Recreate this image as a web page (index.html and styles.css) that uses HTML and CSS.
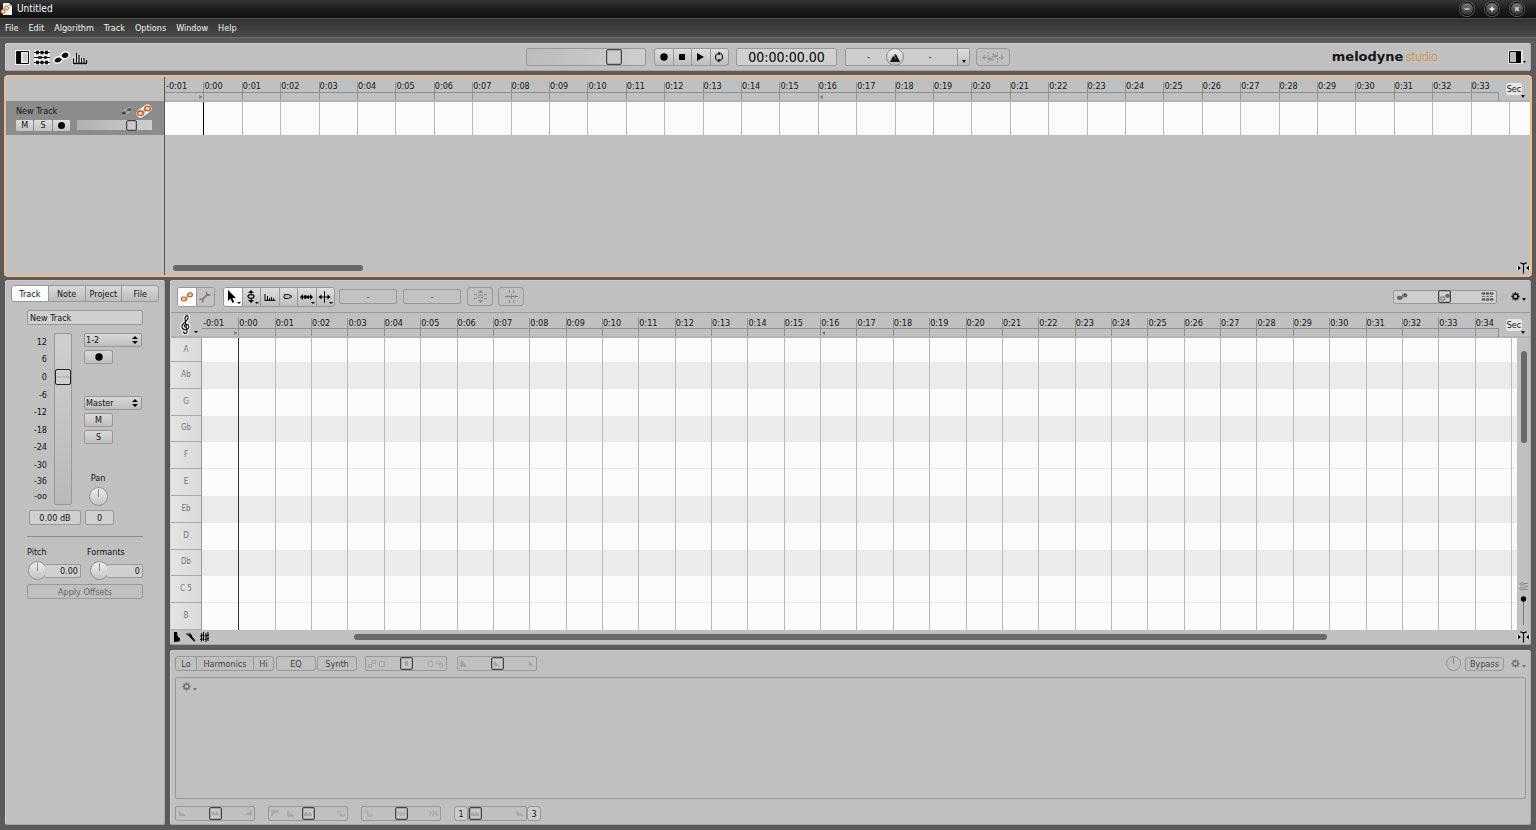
FILE: index.html
```html
<!DOCTYPE html>
<html lang="en">
<head>
<meta charset="utf-8">
<title>Untitled</title>
<link rel="stylesheet" href="styles.css">
</head>
<body>
<svg class="defs" aria-hidden="true">
  <defs>
    <symbol id="gear" viewBox="0 0 10 10"><circle cx="5" cy="5" r="2.6" fill="none" stroke="currentColor" stroke-width="1.8"/><path d="M5 .4v9.200M.4 5h2M7.600 5h2M1.700 1.700l1.500 1.500M6.800 6.800l1.500 1.500M8.300 1.700L6.800 3.200M3.200 6.800L1.700 8.300" stroke="currentColor" stroke-width="1.400" fill="none"/><circle cx="5" cy="5" r="1.600" fill="#c0c0c0"/></symbol>
    <symbol id="caret" viewBox="0 0 4 3"><path d="M0 0h4L2 3z" fill="currentColor"/></symbol>
    <symbol id="zoomcur" viewBox="0 0 13 12"><g stroke="#fff" stroke-width="3" fill="#fff" opacity=".75"><path d="M4.500 1.500h4M6.500 1.500v9.500M1.500 4l1 2-1 2zM11.500 4l-1 2 1 2z"/></g><path d="M3.500 1q3 0 3 2q0-2 3-2" fill="none" stroke="#000" stroke-width="1.300"/><path d="M6.500 2v9.500" stroke="#000" stroke-width="1.500"/><path d="M1 3.500l3 2.500-3 2.500zM12 3.500L9 6l3 2.500z"/></symbol>
    <symbol id="blobs" viewBox="0 0 14 10"><ellipse cx="4" cy="6.500" rx="3.200" ry="2.300" fill="currentColor"/><ellipse cx="9.500" cy="3.800" rx="3" ry="2.300" fill="currentColor"/></symbol>
    <symbol id="linkblobs" viewBox="0 0 16 14"><path d="M4.500 9.500L11.500 4.500" stroke="#fff" stroke-width="8" stroke-linecap="round"/><g fill="#fbd3a8" stroke="#c4512a" stroke-width="1.300"><ellipse cx="4.300" cy="9.300" rx="2.900" ry="2.300"/><ellipse cx="11.500" cy="4.500" rx="2.900" ry="2.300"/></g><path d="M6.500 10.500q2-.5 1.500-3.500 0-3 2-3.500" stroke="#d0713f" stroke-width="1.200" fill="none"/></symbol>
    <symbol id="bars" viewBox="0 0 10 8"><path d="M1 1v6M3 3v4M5 4v3M7 5v2M1 7h8" stroke="currentColor" stroke-width="1.600" fill="none"/></symbol>
    <symbol id="barsmid" viewBox="0 0 10 8"><path d="M1 3v4M3 2v5M5 4v3M7 2v5M9 4v3" stroke="currentColor" stroke-width="1.700" fill="none"/></symbol>
    <symbol id="barsup" viewBox="0 0 10 8"><path d="M1 6v1M3 5v2M5 3v4M7 2v5M9 1v6" stroke="currentColor" stroke-width="1.700" fill="none"/></symbol>
    <symbol id="wave" viewBox="0 0 10 8"><path d="M1 4V1h3v6h2V4M6 7h3V4" stroke="currentColor" fill="none"/></symbol>
    <symbol id="zig" viewBox="0 0 10 8"><path d="M1 7V1l4 6V1l4 6V1" stroke="currentColor" fill="none"/></symbol>
    <symbol id="ramp" viewBox="0 0 8 8"><path d="M1 0q2 4 7 7H1z" fill="currentColor"/></symbol>
  </defs>
</svg>

<header class="titlebar">
  <svg class="docicon" viewBox="0 0 12 12"><path d="M3 0h6l3 3v9H3z" fill="#f2f0ec"/><path d="M9 0v3h3z" fill="#aaa"/><circle cx="6.500" cy="5" r="2" fill="#f8d9bd" stroke="#cf6a35"/><circle cx="3" cy="8.500" r="2" fill="#f8d9bd" stroke="#cf6a35"/></svg>
  <h1 class="title">Untitled</h1>
  <div class="winbtns">
    <button aria-label="Minimize"><svg viewBox="0 0 14 14"><path d="M4 7h6" stroke="#ddd" stroke-width="1.500"/></svg></button>
    <button aria-label="Maximize"><svg viewBox="0 0 14 14"><path d="M7 4v6M4 7h6" stroke="#eee" stroke-width="1.800"/></svg></button>
    <button aria-label="Close"><svg viewBox="0 0 14 14"><path d="M4.800 4.800l4.400 4.400M9.200 4.800L4.800 9.200" stroke="#ccc" stroke-width="1.800"/></svg></button>
  </div>
</header>
<nav class="menubar">
  <button>File</button><button>Edit</button><button>Algorithm</button><button>Track</button><button>Options</button><button>Window</button><button>Help</button>
</nav>

<main class="workspace">
  <section class="panel transport">
    <div class="views">
      <button aria-label="Info pane"><svg width="15" height="15" viewBox="0 0 15 15"><path d="M0 0h15v15H0z" fill="#eee"/><path d="M1.500 1.500h12v12h-12z" fill="#e8e8e8" stroke="#111"/><path d="M2 2h4v11H2z"/><path d="M8 3.500h4v8H8z" fill="#ccc"/></svg></button>
      <button aria-label="Tracks"><svg width="18" height="15" viewBox="0 0 18 15"><path d="M1 2.500h16M1 7.500h16M1 12.500h16" stroke="#fff" stroke-width="5" opacity=".75"/><path d="M1 2.500h16M1 7.500h16M1 12.500h16" stroke="#111"/><path d="M3 2.500h3M7.500 2.500h3M12 2.500h3M3 12.500h3M7.500 12.500h3M12 12.500h3" stroke="#111" stroke-width="3.600"/><path d="M5 7.500h4M11 7.500h3" stroke="#111" stroke-width="2.500"/></svg></button>
      <button aria-label="Notes"><svg width="17" height="15" viewBox="0 0 17 15"><g stroke="#fff" stroke-width="3" stroke-opacity=".8" paint-order="stroke" fill="#111"><path d="M1.500 10q2-3 5-2.500L9 9.500q-2 3-5 3-2.500 0-2.500-2.500z"/><path d="M8.500 6q1-3.500 4.500-3.500 2.500.5 2.500 2.500-1 3-3.500 3-2.500 0-3.500-2z"/></g></svg></button>
      <button aria-label="Sound"><svg class="soundicon" width="16" height="15" viewBox="0 0 16 15"><path d="M1.500 7v6h13M4.500 4v9M7 6v7M9.500 8v5M12 9v4" stroke="#eee" stroke-width="3" fill="none"/><path d="M1.500 8v6M4.500 3v10M7 5v8M9.500 8v5M12 8v5M14.500 10v3M1 13.500h14" stroke="#111" stroke-width="1.300" fill="none"/></svg></button>
    </div>
    <input class="range volume" type="range" aria-label="Volume" value="77">
    <div class="group play">
      <button aria-label="Record"><svg width="8" height="8" viewBox="0 0 8 8"><circle cx="4" cy="4" r="3.700"/></svg></button>
      <button aria-label="Stop"><svg width="6" height="6" viewBox="0 0 6 6"><path d="M0 0h6v6H0z"/></svg></button>
      <button aria-label="Play"><svg width="7" height="8" viewBox="0 0 7 8"><path d="M0 0l7 4-7 4z"/></svg></button>
      <button aria-label="Cycle"><svg width="10" height="12" viewBox="0 0 10 12"><path d="M5.500 2.500Q1.500 2.500 1.500 6q0 2 1 3M4.500 9.500Q8.500 9.500 8.500 6q0-2-1-3" fill="none" stroke="#111" stroke-width="1.100"/><path d="M4.500.5l3 2-3 2zM5.500 7.500v4l-3-2z"/></svg></button>
    </div>
    <output class="clock">00:00:00.00</output>
    <div class="tempo"><span>-</span><button class="metro" aria-label="Metronome"><svg width="10" height="9" viewBox="0 0 10 9"><path d="M0 9L3 3l1.500 1V1l2 1 3.500 7z" fill="#161616"/><path d="M3 1l3 5" stroke="#bbb" stroke-width=".6"/></svg></button><span>-</span><button class="more" aria-label="Tempo options"><svg width="4" height="3"><use href="#caret"/></svg></button></div>
    <button class="ghost autos" aria-label="Auto stretch"><svg width="22" height="11" viewBox="0 0 22 11" fill="#999"><path d="M0 5.500L3 2.500v6zM22 5.500L19 2.500v6z"/><path d="M3 5.500h2M17 5.500h2" stroke="#999"/><ellipse cx="8" cy="7" rx="2.500" ry="1.700"/><ellipse cx="13" cy="4" rx="2.500" ry="1.700"/><path d="M6 0v11M15.500 0v11M11 1v9" stroke="#999" stroke-dasharray="2 1"/></svg></button>
    <div class="brand"><b>melodyne</b><span>studio</span></div>
    <button class="infopane" aria-label="Panels"><svg width="19" height="15" viewBox="0 0 19 15"><path d="M0 0h15v14H0z" fill="#e4e4e4"/><path d="M1.500 1.500h11v11h-11z" fill="#bbb" stroke="#111"/><path d="M8 1h5v12H8z"/><path d="M15 11h3l-1.500 2z"/></svg></button>
  </section>

  <section class="tracks">
    <div class="tracklist">
      <div class="listhead"></div>
      <div class="track">
        <div class="trackname"><span>New Track</span>
          <svg width="13" height="12" viewBox="0 0 13 12"><path d="M4 8L9 4.500" stroke="#aaa" stroke-width="5" stroke-linecap="round"/><path d="M4 8L9 4.500" stroke="#777"/><ellipse cx="3.800" cy="8" rx="2.200" ry="1.600" fill="#444"/><ellipse cx="9.200" cy="4.500" rx="2.200" ry="1.600" fill="#555"/></svg>
          <svg width="16" height="14"><use href="#linkblobs"/></svg></div>
        <div class="trackctl"><div class="msr"><button>M</button><button>S</button><button aria-label="Record arm"><svg width="7" height="7" viewBox="0 0 6 6"><circle cx="3" cy="3" r="3"/></svg></button></div><input class="range mini" type="range" aria-label="Track volume" value="77"></div>
      </div>
    </div>
    <div class="arrange">
      <div class="ruler"><div class="ticks" data-count="35"></div><button class="unit"><span>Sec</span><svg width="4" height="3"><use href="#caret"/></svg></button></div>
      <div class="lane"><div class="ticks grid" data-count="35"></div></div>
      <div class="empty"></div>
      <div class="hscroll"><i class="thumb top"></i><svg width="13" height="12"><use href="#zoomcur"/></svg></div>
    </div>
  </section>

  <div class="lower">
    <aside class="panel inspector">
      <div class="tabs" role="tablist"><button class="on">Track</button><button>Note</button><button>Project</button><button>File</button></div>
      <div class="form">
        <input class="name" type="text" aria-label="Track name" value="New Track">
        <div class="mixer">
          <ul class="scale"><li>12</li><li>6</li><li>0</li><li>-6</li><li>-12</li><li>-18</li><li>-24</li><li>-30</li><li>-36</li><li>-oo</li></ul>
          <input class="fader" type="range" aria-label="Level" value="77">
          <div class="strip">
            <div class="pick"><select aria-label="Input"><option>1-2</option></select><svg width="6" height="8" viewBox="0 0 6 8"><path d="M0 3h6L3 0zM0 5h6L3 8z"/></svg></div>
            <button class="small" aria-label="Record"><svg width="8" height="8" viewBox="0 0 8 8"><circle cx="4" cy="4" r="3.700"/></svg></button>
            <div class="pick out"><select aria-label="Output"><option>Master</option></select><svg width="6" height="8" viewBox="0 0 6 8"><path d="M0 3h6L3 0zM0 5h6L3 8z"/></svg></div>
            <button class="small">M</button>
            <button class="small">S</button>
            <div class="pan"><label for="pan">Pan</label><i class="knob"></i></div>
          </div>
        </div>
        <div class="values"><input type="text" aria-label="Level value" value="0.00 dB"><input id="pan" type="text" value="0"></div>
        <hr>
        <div class="offsets">
          <div><label for="pitch">Pitch</label><div class="dial"><i class="knob"></i><input id="pitch" type="text" value="0.00"></div></div>
          <div><label for="formants">Formants</label><div class="dial"><i class="knob"></i><input id="formants" type="text" value="0"></div></div>
        </div>
        <button class="apply" disabled>Apply Offsets</button>
      </div>
    </aside>

    <div class="rightcol">
      <section class="panel editor">
        <div class="tools">
          <div class="group pair">
            <button class="on" aria-label="Edit mode"><svg width="14" height="12" viewBox="0 0 16 14"><use href="#linkblobs"/></svg></button>
            <button class="off" aria-label="Note assignment"><svg width="12" height="12" viewBox="0 0 12 12"><path d="M3.500 8.500L8.500 3.500" stroke="#777" stroke-width="1.700"/><path d="M.5 8.500Q4 6.500 4 11.500M7.500.5q-1 4 4 3.500" fill="none" stroke="#777" stroke-width="1.500"/></svg></button>
          </div>
          <div class="group six">
            <button class="on" aria-label="Main tool"><svg width="16" height="14" viewBox="0 0 16 14"><path d="M3 0v11l2.500-2.500L7.500 13l1.800-1-2-4H11z"/><path d="M12 12h4l-2 2z"/></svg></button>
            <button aria-label="Pitch tool"><svg width="16" height="14" viewBox="0 0 16 14"><path d="M8 0l3 3H5zM8 13l3-3H5z"/><path d="M8 2v2M8 9v2" stroke="#000"/><ellipse cx="8" cy="6.500" rx="3" ry="1.800" fill="none" stroke="#000" stroke-width="1.200"/><path d="M12 12h4l-2 2z"/></svg></button>
            <button aria-label="Formant tool"><svg width="12" height="8" viewBox="0 0 12 8"><path d="M1 1v6M3.500 3v4M5.500 5v2M7.500 4v3M9.500 5v2M.5 7.400h11" fill="none" stroke="#000"/></svg></button>
            <button aria-label="Amplitude tool"><svg width="10" height="7" viewBox="0 0 10 7"><path d="M1.500 1.500h4l3.500 2-3.500 2h-4q-1-2 0-4z" fill="#bbb" stroke="#111"/></svg></button>
            <button aria-label="Timing tool"><svg width="16" height="14" viewBox="0 0 16 14"><path d="M1 7l3-3v6zM14 7l-3-3v6z"/><path d="M3 7h9" stroke="#000"/><ellipse cx="6.300" cy="7" rx="1.500" ry="1.900"/><ellipse cx="9.200" cy="7" rx="1.200" ry="1.700"/><path d="M12 12h4l-2 2z"/></svg></button>
            <button aria-label="Separation tool"><svg width="16" height="14" viewBox="0 0 16 14"><path d="M7.500 1v12M3 7h9" stroke="#000"/><path d="M1.500 7l3-2.500v5zM13.500 7l-3-2.500v5z"/><path d="M12 12h4l-2 2z"/></svg></button>
          </div>
          <input class="field" type="text" aria-label="Pitch" value="-">
          <input class="field" type="text" aria-label="Cents" value="-">
          <button class="ghost" aria-label="Correct pitch"><svg width="13" height="13" viewBox="0 0 13 13"><path d="M6.500 0l2.500 3H4zM6.500 13L9 10H4z" fill="#888"/><ellipse cx="6.500" cy="6.500" rx="2.500" ry="1.500" fill="none" stroke="#888"/><path d="M0 4.500h3M0 8.500h3M10 4.500h3M10 8.500h3" stroke="#888"/></svg></button>
          <button class="ghost" aria-label="Quantize time"><svg width="13" height="13" viewBox="0 0 13 13"><path d="M0 6.500h13M3 5v3M6.500 4v5M10 5v3M4.500 0v3M8.500 0v3M4.500 10v3M8.500 10v3" stroke="#888"/></svg></button>
          <div class="slider notes"><input class="range" type="range" aria-label="Note display" value="49"><svg class="a" width="13" height="9"><use href="#blobs"/></svg><svg class="b" width="12" height="10" viewBox="0 0 12 10"><ellipse cx="3.500" cy="6.500" rx="2.500" ry="1.600" fill="none" stroke="#666"/><ellipse cx="8.500" cy="3.800" rx="2.500" ry="1.900" fill="#666"/></svg><svg class="c" width="13" height="9" viewBox="0 0 13 9"><path d="M0 1.500h13M0 7.500h13" stroke="#777" stroke-width=".8"/><path d="M1 1.500h3M5 1.500h3M9 1.500h3M1 7.500h3M5 7.500h3M9 7.500h3" stroke="#666" stroke-width="2.400"/><path d="M1 4.500h3M5 4.500h3M9 4.500h3" stroke="#777"/></svg></div>
          <button class="gear" aria-label="Editor options"><svg width="9" height="9"><use href="#gear"/></svg><svg width="4" height="3"><use href="#caret"/></svg></button>
        </div>
        <div class="ruler low">
          <button class="clef" aria-label="Scale"><svg width="20" height="20" viewBox="0 0 20 20"><path d="M5.500 16.500q0 2 2 2 2-.5 1.500-2.500L7 4q0-3 2-3.500 2 1 .5 4L6 8q-3 3-1.500 5.500 2 2 5 .5 2.500-2 .5-4.200-2.500-1.300-3.500 1 0 1.200 1 1.700" fill="none" stroke="#fff" stroke-width="4" stroke-opacity=".7"/><path d="M5.500 16.500q0 2 2 2 2-.5 1.500-2.500L7 4q0-3 2-3.500 2 1 .5 4L6 8q-3 3-1.500 5.500 2 2 5 .5 2.500-2 .5-4.200-2.500-1.300-3.500 1 0 1.200 1 1.700" fill="none" stroke="#111" stroke-width="1.100"/><path d="M16 16h4l-2 2z"/></svg></button>
          <div class="ticks" data-count="36"></div><button class="unit"><span>Sec</span><svg width="4" height="3"><use href="#caret"/></svg></button>
        </div>
        <div class="roll">
          <div class="keys"></div>
          <div class="notesarea"><div class="rows"></div><div class="ticks grid" data-count="36"></div></div>
          <div class="vscroll"><i class="thumb"></i><svg class="zoomer" width="11" height="46" viewBox="0 0 11 46"><g fill="none" stroke="#888"><ellipse cx="4" cy="2" rx="2" ry="1.200"/><ellipse cx="4" cy="6.500" rx="2" ry="1.200"/><path d="M6 1.500h4M6 4.500h4M6 7.500h4"/></g><path d="M5.500 18v25" stroke="#777"/><circle cx="5.500" cy="17" r="2.700"/></svg></div>
        </div>
        <div class="hscroll foot">
          <svg width="36" height="10" viewBox="0 0 36 10"><path d="M1 0h3l.5 4L7 6.500V9l-4 1H1z"/><path d="M13.500 1.500l5 4M16 1l3 3.500M18.500 5l3.500 4M17 4.500l4.500 4.500" stroke="#000" stroke-width="1.200" fill="none"/><path d="M28.500 1v9M30.500 0v9M33 1v9M35 0v9M27 4l4-1M27 7.500l4-1M31.500 4l4-1M31.500 7.500l4-1" stroke="#000"/></svg>
          <div class="rail"><i class="thumb"></i></div>
          <svg width="13" height="12"><use href="#zoomcur"/></svg>
        </div>
      </section>

      <section class="panel sound">
        <div class="soundbar">
          <div class="group harm"><button>Lo</button><button>Harmonics</button><button>Hi</button></div>
          <button class="ghost wide">EQ</button>
          <button class="ghost wide">Synth</button>
          <div class="slider s82"><input class="range" type="range" aria-label="Emphasis" value="50"><svg class="a" width="18" height="8" viewBox="0 0 18 8" fill="none" stroke="currentColor"><path d="M.5 4.500h3v3h-3zM4.500.5h3v3h-3zM11.500 1.500h5v5h-5z"/></svg><svg class="b" width="8" height="7" viewBox="0 0 8 7"><path d="M3 1h3v5H3z" fill="currentColor"/></svg><svg class="c" width="17" height="8" viewBox="0 0 17 8" fill="none" stroke="currentColor"><circle cx="3.500" cy="4" r="2.700"/><circle cx="11.500" cy="2.500" r="1.800"/><circle cx="14.500" cy="5.500" r="1.800"/></svg></div>
          <div class="slider s80"><input class="range" type="range" aria-label="Contour" value="50"><svg class="a" width="7" height="7" viewBox="0 0 7 7"><path d="M0 1h3l4 6H0z" fill="currentColor"/></svg><svg class="b" width="7" height="7"><use href="#ramp"/></svg><svg class="c" width="6" height="7"><use href="#ramp"/></svg></div>
          <i class="knob flat"></i>
          <button class="ghost bypass">Bypass</button>
          <button class="gear dim" aria-label="Sound options"><svg width="9" height="9"><use href="#gear"/></svg><svg width="4" height="3"><use href="#caret"/></svg></button>
        </div>
        <div class="canvas"><button class="gear dim" aria-label="Graph options"><svg width="9" height="9"><use href="#gear"/></svg><svg width="4" height="3"><use href="#caret"/></svg></button></div>
        <div class="soundfoot">
          <div class="slider s80"><input class="range" type="range" aria-label="Brilliance" value="50"><svg class="a" width="8" height="6"><use href="#bars"/></svg><svg class="b" width="8" height="6"><use href="#barsmid"/></svg><svg class="c" width="8" height="6"><use href="#barsup"/></svg></div>
          <div class="slider s80"><input class="range" type="range" aria-label="Odd and even" value="50"><svg class="a" width="24" height="7" viewBox="0 0 24 7"><path d="M1 0v6M3 0v4M5 0v3M7 0v2M17 1v5M19 3v3M21 4v2M17 6h6" stroke="currentColor" stroke-width="1.400" fill="none"/></svg><svg class="b" width="8" height="7"><use href="#barsmid"/></svg><svg class="c" width="8" height="7"><use href="#wave"/></svg></div>
          <div class="slider s80"><input class="range" type="range" aria-label="Comb" value="50"><svg class="a" width="9" height="7"><use href="#wave"/></svg><svg class="b" width="8" height="7"><use href="#zig"/></svg><svg class="c" width="9" height="7"><use href="#zig"/></svg></div>
          <div class="numbered"><button>1</button><div class="slider s58"><input class="range" type="range" aria-label="Partials" value="0"><svg class="a" width="8" height="7"><use href="#barsmid"/></svg><svg class="c" width="8" height="6"><use href="#bars"/></svg></div><button>3</button></div>
        </div>
      </section>
    </div>
  </div>
</main>
<script src="app.js"></script>
</body>
</html>
```

FILE: styles.css
```css
* { box-sizing: border-box; }
body { margin: 0; height: 100vh; min-height: 700px; display: flex; flex-direction: column; background: #5b5b5b; color: #141414; overflow: hidden; }
body, button, input, select, output { font-family: "DejaVu Sans Condensed", "DejaVu Sans", sans-serif; font-size: 9px; line-height: 12px; }
button { margin: 0; padding: 0; border: 0; background: none; color: inherit; display: flex; align-items: center; justify-content: center; }
input, select { margin: 0; color: inherit; border-radius: 2px; }
svg { display: block; flex: none; }
.defs { position: absolute; width: 0; height: 0; }

.titlebar { height: 18px; display: flex; align-items: center; padding: 0 12px 0 0; background: linear-gradient(#373737, #1c1c1c 50%, #101010); color: #fff; flex: none; }
.docicon { width: 12px; height: 12px; }
.title { flex: 1; margin: 0 0 0 5px; font-size: 10px; line-height: 14px; font-weight: 400; }
.winbtns { display: flex; gap: 11px; }
.winbtns button { width: 14px; height: 14px; border-radius: 50%; background: linear-gradient(#777, #333); border: 1px solid #0a0a0a; box-shadow: 0 0 0 1px #555; }
.menubar { height: 20px; flex: none; display: flex; gap: 10px; padding: 0 5px; background: linear-gradient(#333, #4a4a4a); border-top: 1px solid #505050; border-bottom: 1px solid #6b6b6b; color: #f2f2f2; }

.workspace { flex: 1; min-height: 0; display: flex; flex-direction: column; padding: 5px; background: #5b5b5b; }
.panel { background: #c0c0c0; border-radius: 2px; border: 1px solid; border-color: #c9c9c9 #ababab #a6a6a6 #cfcfcf; }

.transport { height: 28px; flex: none; position: relative; display: flex; align-items: center; justify-content: center; padding: 0 6px; }
.views { display: flex; gap: 3px; align-items: center; position: absolute; left: 9px; }
.views button:nth-child(3), .views button:nth-child(4) { margin-left: -1px; }
.group { display: flex; border: 1px solid #989898; border-radius: 3px; overflow: hidden; background: linear-gradient(#dedede, #bdbdbd); }
.group button { flex: 1; }
.group button + button { border-left: 1px solid #999; }
.group .on { background: #fdfdfd; }
.group .off { background: #c3c3c3; }
.range { appearance: none; width: 100%; border: 1px solid #989898; background: linear-gradient(90deg, #bcbcbc, #cecece); outline: 0; }
.range::-webkit-slider-thumb { appearance: none; box-sizing: border-box; width: 13px; height: 13px; border: 1px solid #444; border-radius: 2px; background: rgba(205, 205, 205, .5); box-shadow: inset 0 0 0 1px rgba(120, 120, 120, .4); }
.volume { width: 120px; height: 18px; margin-right: 8px; }
.volume::-webkit-slider-thumb { width: 16px; height: 16px; }
.play { width: 75px; height: 18px; margin-right: 7px; }
.clock { width: 101px; height: 18px; margin-right: 8px; border: 1px solid #989898; border-radius: 2px; background: #d0d0d0; text-align: center; font-size: 14px; line-height: 17px; color: #000; }
.tempo { width: 125px; height: 18px; margin-right: 6px; display: flex; align-items: center; border: 1px solid #989898; border-radius: 2px; background: #cdcdcd; }
.tempo span { width: 44px; text-align: center; }
.metro { width: 18px; height: 18px; border-radius: 50%; border: 1px solid #8e8e8e; background: linear-gradient(#eee, #bbb); margin: 0 4px 0 -5px; }
.tempo span:first-child { width: 45px; }
.more { width: 12px; height: 16px; margin-left: auto; border-left: 1px solid #989898; background: linear-gradient(#dedede, #bdbdbd); padding-top: 9px; }
.ghost { border: 1px solid #999; border-radius: 3px; color: #444; }
.autos { width: 34px; height: 18px; }
.brand { position: absolute; right: 92px; display: flex; align-items: baseline; gap: 2px; line-height: 16px; }
.brand b { font: 700 13px/16px "DejaVu Sans", sans-serif; color: #151515; }
.brand span { font: 300 12px/16px Roboto, sans-serif; color: #e08a2c; }
.infopane { position: absolute; right: 3px; }

.tracks { height: 202px; flex: none; margin: 4px -1px 3px; display: flex; border: 2px solid #efbb86; border-radius: 4px; background: #c0c0c0; }
.tracklist { width: 159px; flex: none; border-right: 1px solid #555; }
.listhead { height: 24px; }
.track { height: 34px; background: #8c8c8c; padding: 3px 12px 0 10px; }
.trackname { display: flex; align-items: center; height: 14px; gap: 3px; }
.trackname span { flex: 1; }
.trackctl { display: flex; align-items: center; gap: 7px; height: 12px; margin-top: 1px; }
.msr { display: flex; width: 54px; gap: 1px; }
.msr button { flex: 1; height: 11px; background: linear-gradient(#ddd, #c2c2c2); border-radius: 1px; }
.mini { flex: 1; min-width: 0; height: 10px; border: 0; background: linear-gradient(90deg, #b0b0b0, #cecece); border-radius: 0; }
.mini::-webkit-slider-thumb { width: 11px; height: 11px; }
.arrange { flex: 1; min-width: 0; display: flex; flex-direction: column; }

.ruler { height: 25px; flex: none; display: flex; position: relative; border-bottom: 2px solid #b2b2b2; }
.ticks { flex: 1; display: grid; grid-auto-flow: column; grid-auto-columns: 1fr; margin-right: 21px; }
.ruler .ticks::after { content: ""; position: absolute; right: 31px; left: 0; top: 15px; height: 8px; border-top: 1px solid #8f8f8f; border-right: 1px solid #8f8f8f; }
.ruler .tick { border-left: 1px solid #929292; margin-top: 5px; line-height: 9px; white-space: nowrap; min-width: 0; position: relative; }
.ruler .tick:first-child { border-left-color: transparent; }
.mark { position: absolute; top: 13px; width: 3px; height: 4px; background: #777; }
.mark.in { left: -5px; clip-path: polygon(0 0, 100% 50%, 0 100%); }
.mark.out { left: 1px; clip-path: polygon(100% 0, 0 50%, 100% 100%); }
.unit { position: absolute; right: 2px; top: 6px; width: 28px; height: 16px; align-items: flex-start; }
.unit span { background: #e6e6e6; border-radius: 3px; padding: 0 1px; line-height: 12px; }
.unit svg { position: absolute; right: 3px; bottom: 1px; }
.lane { height: 33px; background: #fbfbfb; display: flex; }
.grid .tick { border-left: 1px solid #b9b9b9; }
.grid .tick:first-child { border-color: transparent; }
.grid .tick:nth-child(2) { border-color: #000; }
.grid .tick:last-child { box-shadow: 1px 0 #bcbcbc; }
.empty { flex: 1; }
.hscroll { height: 15px; display: flex; align-items: center; justify-content: space-between; padding: 0 0 0 8px; }
.thumb { display: block; height: 6px; border-radius: 3px; background: #696969; }
.thumb.top { width: 190px; }

.lower { flex: 1; min-height: 0; display: flex; gap: 5px; }
.inspector { width: 160px; flex: none; padding: 4px 5px; }
.tabs { display: flex; height: 17px; border: 1px solid #999; border-radius: 3px; overflow: hidden; background: linear-gradient(#d8d8d8, #bcbcbc); }
.tabs button { flex: 1; }
.tabs button + button { border-left: 1px solid #999; }
.tabs .on { background: #fdfdfd; }
.form { padding: 8px 16px 0 16px; }
input[type=text] { border: 1px solid #989898; background: #d0d0d0; height: 15px; padding: 0 2px; }
.name { width: 100%; display: block; }
.mixer { display: grid; grid-template-columns: 20px 18px 58px; height: 172px; margin-top: 8px; column-gap: 7px; }
.scale { height: 170px; margin: 0; padding: 0; list-style: none; text-align: right; display: grid; grid-template-rows: repeat(8, 18fr) 15fr 15fr; align-items: center; }
.fader { appearance: none; writing-mode: vertical-lr; direction: rtl; width: 18px; height: 172px; border: 1px solid #989898; background: linear-gradient(#cfcfcf, #b9b9b9); outline: 0; }
.fader::-webkit-slider-thumb { appearance: none; box-sizing: border-box; width: 16px; height: 16px; border: 1px solid #222; border-radius: 2px; background: linear-gradient(transparent 6px, #bbb 6px, #bbb 8px, transparent 8px), #cfcfcf; }
.strip { display: flex; flex-direction: column; align-items: flex-start; gap: 3px; padding-left: 5px; width: 63px; }
.pick { position: relative; width: 58px; }
.pick select { appearance: none; width: 58px; height: 14px; padding: 0 1px; border: 1px solid #989898; background: linear-gradient(#d9d9d9, #bebebe); display: block; line-height: 11px; }
.pick svg { position: absolute; right: 4px; top: 3px; pointer-events: none; }
.pick.out { margin-top: 29px; }
.small { width: 29px; height: 14px; border: 1px solid #989898; border-radius: 2px; background: linear-gradient(#d9d9d9, #bebebe); }
.pan { width: 28px; margin-top: 25px; display: flex; flex-direction: column; align-items: center; gap: 3px; }
.knob { display: block; width: 19px; height: 19px; border-radius: 50%; border: 1px solid #929292; flex: none; background: linear-gradient(#888, #888) 8px 1px / 1px 8px no-repeat, linear-gradient(#ececec, #c4c4c4); }
.values { display: flex; gap: 4px; margin-top: 5px; padding-left: 2px; }
.values input { text-align: center; width: 52px; }
.values input + input { width: 29px; }
.inspector hr { border: 0; border-top: 1px solid #8d8d8d; margin: 11px 0 9px; }
.offsets { display: flex; justify-content: space-between; }
.offsets > div { width: 54px; }
.offsets label { display: block; }
.offsets > div + div label { margin-left: -2px; }
.dial { display: flex; align-items: center; padding-left: 1px; margin-top: 3px; }
.dial input { flex: 1; min-width: 0; margin-left: -2px; height: 14px; text-align: right; border-left: 0; }
.apply { width: 100%; height: 15px; margin-top: 4px; border: 1px solid #999; border-radius: 2px; color: #666; }

.rightcol { flex: 1; min-width: 0; display: flex; flex-direction: column; gap: 5px; }
.editor { flex: 1; min-height: 0; display: flex; flex-direction: column; }
.tools { height: 32px; flex: none; display: flex; align-items: center; padding: 0 4px 0 6px; border-bottom: 1px solid #999; }
.tools .group { height: 20px; margin-right: 8px; }
.pair { width: 38px; }
.six { width: 112px; }
.tools .six { margin-right: 4px; }
.tools .field { width: 58px; height: 15px; margin-right: 6px; background: #c2c2c2; text-align: center; color: #555; }
.tools .ghost { width: 26px; height: 19px; margin-right: 5px; }
.slider { position: relative; display: flex; align-items: center; height: 15px; color: #a3a3a3; }
.slider .range { height: 15px; background: none; }
.slider svg { position: absolute; pointer-events: none; top: 4px; }
.slider .a { left: 3px; }
.slider .b { left: 50%; margin-left: -4px; }
.slider .c { right: 3px; }
.notes { width: 104px; margin-left: auto; color: #666; }
.slider.notes .range { height: 14px; background: #cdcdcd; }
.slider.notes svg { top: 3px; }
.slider.notes .b { margin-left: -6px; }
.gear { gap: 2px; align-items: flex-end; }
.tools .gear { margin-left: 14px; }
.dim { color: #777; }
.low .clef { width: 31px; padding-left: 2px; }
.low .unit { right: 2px; }
.low .ticks { margin-right: 19px; }
.low .tick { line-height: 10px; }
.low .ticks::after { left: 31px; }
.roll { flex: 1; min-height: 0; display: flex; }
.keys, .rows { display: grid; grid-template-rows: 24px repeat(10, 1fr); }
.keys { width: 31px; border-right: 1px solid #999; background: linear-gradient(90deg, #e4e4e4, #dadada); color: #777; font-size: 8px; }
.keys div { display: flex; align-items: center; justify-content: center; border-bottom: 1px solid #aaa; min-height: 0; }
.notesarea { flex: 1; position: relative; display: flex; background: #fbfbfb; }
.rows { flex: 1; }
.rows .black { background: #ebebeb; }
.rows .seam { border-bottom: 1px solid #ececec; }
.notesarea .grid { position: absolute; inset: 0 6px 0 0; margin: 0; }
.notesarea .tick:nth-child(2) { border-color: #333; }
.vscroll { width: 13px; display: flex; flex-direction: column; justify-content: space-between; align-items: center; padding: 13px 0 2px; }
.vscroll .thumb { width: 6px; height: 92px; }
.foot { padding-left: 2px; flex: none; height: 14px; }
.rail { flex: 1; padding-left: calc(11% - 4px); padding-right: 14%; }

.sound { height: 175px; flex: none; display: flex; flex-direction: column; padding: 5px 4px 4px; }
.soundbar { display: flex; align-items: center; height: 15px; color: #444; }
.harm { width: 99px; height: 15px; background: none; }
.harm button { flex: 0 0 20px; }
.harm button:nth-child(2) { flex: 1; }
.soundbar .wide { width: 40px; height: 15px; margin-left: 1px; }
.soundbar .harm + .wide { margin-left: 2px; }
.s82 { width: 82px; margin: 0 10px 0 8px; }
.s80 { width: 80px; }
.s58 { width: 59px; }
.soundbar .flat { width: 15px; height: 15px; margin-left: auto; margin-right: 4px; background: linear-gradient(#888, #888) 6px 0 / 1px 7px no-repeat; }
.bypass { width: 39px; height: 14px; margin-right: 7px; }
.canvas { flex: 1; margin: 6px 0 7px; padding: 4px 6px; border: 1px solid #989898; border-radius: 2px; }
.soundfoot { display: flex; gap: 13px; height: 14px; }
.numbered { display: flex; height: 15px; }
.numbered > button { width: 14px; border: 1px solid #989898; border-radius: 3px; background: #cbcbcb; }
```

FILE: app.js
```js
function timeLabel(i) {
  if (i < 0) return "-0:01";
  return "0:" + String(i).padStart(2, "0");
}

document.querySelectorAll(".ticks").forEach(function (box) {
  var ruler = !box.classList.contains("grid");
  for (var i = 0; i < Number(box.dataset.count); i++) {
    var tick = document.createElement("div");
    tick.className = "tick";
    if (ruler) {
      tick.textContent = timeLabel(i - 1);
      if (i === 1 || i === 17) {
        var mark = document.createElement("i");
        mark.className = i === 1 ? "mark in" : "mark out";
        tick.appendChild(mark);
      }
    }
    box.appendChild(tick);
  }
});

var keys = document.querySelector(".keys");
var rows = document.querySelector(".rows");
["A", "Ab", "G", "Gb", "F", "E", "Eb", "D", "Db", "C 5", "B"].forEach(function (name) {
  var key = document.createElement("div");
  key.textContent = name;
  keys.appendChild(key);
  var row = document.createElement("div");
  if (name.endsWith("b")) row.className = "black";
  if (name === "F" || name === "C 5") row.className = "seam";
  rows.appendChild(row);
});
```
